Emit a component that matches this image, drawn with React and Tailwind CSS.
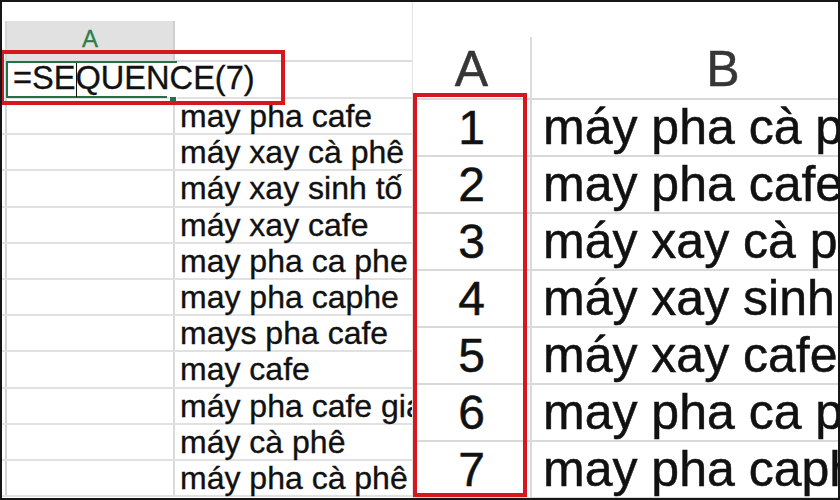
const leftRows = [
  "may pha cafe",
  "máy xay cà phê",
  "máy xay sinh tố",
  "máy xay cafe",
  "may pha ca phe",
  "may pha caphe",
  "mays pha cafe",
  "may cafe",
  "máy pha cafe giá rẻ",
  "máy cà phê",
  "máy pha cà phê",
];

const rightRows = [
  "máy pha cà phê",
  "may pha cafe",
  "máy xay cà phê",
  "máy xay sinh tố",
  "máy xay cafe",
  "may pha ca phe",
  "may pha caphe",
];

function LeftSheet() {
  return (
    <div className="w-[410px] shrink-0 overflow-hidden flex flex-col">
      <div className="h-[19px] shrink-0" />
      {/* column header */}
      <div className="flex h-[41px] shrink-0 border-b-2 border-[#dcdcdc]">
        <div className="w-[5px] shrink-0 border-r-2 border-[#d4d4d4]" />
        <div className="w-[168px] shrink-0 bg-[#e1e1e1] border-r-2 border-[#cfcfcf] flex justify-center pt-[6px]">
          <span className="text-[24px] leading-[24px] text-[#2f7d4c] [-webkit-text-stroke:0.3px_currentColor]">A</span>
        </div>
        <div className="flex-1" />
      </div>
      {/* formula row */}
      <div className="flex h-[37px] shrink-0 border-b-2 border-[#e1e1e1]">
        <div className="w-[5px] shrink-0 border-r-2 border-[#d4d4d4]" />
        <div className="relative w-[168px] shrink-0 pl-[6px]">
          <span className="relative z-10 whitespace-nowrap text-[32.6px] leading-[32px] text-[#111] [-webkit-text-stroke:0.35px_currentColor]">
            =SE
            <span className="relative inline-block w-0">
              <span className="absolute left-[1px] top-[-26px] w-px h-[34px] bg-[#111]" />
            </span>
            QUENCE(7)
          </span>
          <div className="absolute -top-[1px] -left-[1px] -bottom-[1px] w-[161px] border-t-2 border-l-2 border-b-2 border-[#217346]" />
          <div className="absolute -top-[1px] left-[160px] w-[10px] h-[2px] bg-[#217346]" />
          <div className="absolute top-[34px] left-[162px] w-[8px] h-[6px] bg-[#217346] border border-white" />
        </div>
        <div className="flex-1" />
      </div>
      {leftRows.map((t) => (
        <div key={t} className="flex h-[36.2px] shrink-0 border-b-2 border-[#e1e1e1]">
          <div className="w-[5px] shrink-0 border-r-2 border-[#d4d4d4]" />
          <div className="w-[168px] shrink-0 border-r-2 border-[#dadada]" />
          <div className="flex-1 pl-[5px] whitespace-nowrap text-[32px] leading-[34px] text-[#111] [-webkit-text-stroke:0.35px_currentColor]">
            {t}
          </div>
        </div>
      ))}
    </div>
  );
}

function RightSheet() {
  return (
    <div className="flex-1 overflow-hidden flex flex-col border-l border-[#e4e4e4]">
      <div className="h-[35px] shrink-0" />
      <div className="flex h-[63px] shrink-0 border-b-2 border-[#d9d9d9]">
        <div className="w-[119px] shrink-0 border-r-2 border-[#dcdcdc] text-center text-[50px] leading-[65px] text-[#363636] [-webkit-text-stroke:0.5px_currentColor]">
          A
        </div>
        <div className="w-[382px] shrink-0 text-center text-[50px] leading-[65px] text-[#363636] [-webkit-text-stroke:0.5px_currentColor]">
          B
        </div>
      </div>
      {rightRows.map((t, i) => (
        <div key={t} className="flex h-[57px] shrink-0 border-b-2 border-[#d9d9d9]">
          <div className="w-[119px] shrink-0 border-r-2 border-[#d9d9d9] text-center text-[48px] leading-[56px] text-[#111] [-webkit-text-stroke:0.5px_currentColor]">
            {i + 1}
          </div>
          <div className="w-[382px] shrink-0 pl-[11px] whitespace-nowrap text-[50px] leading-[55px] text-[#111] [-webkit-text-stroke:0.5px_currentColor]">
            {t}
          </div>
        </div>
      ))}
    </div>
  );
}

export default function App() {
  return (
    <div className="w-[840px] h-[500px] bg-white font-['Liberation_Sans',Arial,sans-serif]">
      <div className="relative w-full h-full border-2 border-[#161616] flex overflow-hidden">
        <LeftSheet />
        <RightSheet />
        {/* red highlight boxes */}
        <div className="absolute left-[-2px] top-[48px] w-[285px] h-[55px] border-4 border-[#d5171e]" />
        <div className="absolute left-[411px] top-[91px] w-[114px] h-[404px] border-4 border-[#d5171e]" />
      </div>
    </div>
  );
}
